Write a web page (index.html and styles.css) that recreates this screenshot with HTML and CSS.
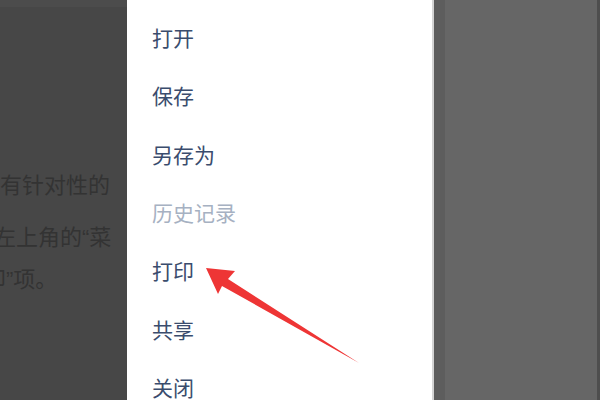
FILE: index.html
```html
<!DOCTYPE html>
<html lang="zh-CN">
  <head>
    <meta charset="UTF-8" />
    <title>菜单 - 打印</title>
    <link rel="stylesheet" href="styles.css">
  </head>
  <body>
    <div class="screen">
      <div class="doc">
        <div class="doc-top"></div>
        <div class="doc-text">
          <p class="line line-1">有针对性的</p>
          <p class="line line-2">左上角的“菜</p>
          <p class="line line-3">印”项。</p>
        </div>
      </div>

      <ul class="menu">
        <li class="menu-item">打开</li>
        <li class="menu-item">保存</li>
        <li class="menu-item">另存为</li>
        <li class="menu-item disabled">历史记录</li>
        <li class="menu-item">打印</li>
        <li class="menu-item">共享</li>
        <li class="menu-item">关闭</li>
      </ul>

      <div class="side"></div>

      <!-- red pointer arrow -->
      <svg class="arrow" width="600" height="400" viewBox="0 0 600 400">
        <polygon points="206,268 235,271 228,279 359,363 222,286 218,294" fill="#ee3535" />
      </svg>
    </div>
  </body>
</html>
```

FILE: styles.css
```css
body {
  margin: 0;
  padding: 0;
  font-family: "Liberation Sans", "Noto Sans CJK SC", sans-serif;
}

.screen {
  position: relative;
  display: flex;
  width: 600px;
  height: 400px;
  overflow: hidden;
  background: #ffffff;
}

.doc {
  width: 127px;
  flex-shrink: 0;
  background: #474747;
  overflow: hidden;
}

.doc-top {
  height: 7px;
  background: #4c4c4c;
}

.doc-text {
  padding-top: 168px;
}

.line {
  margin: 0;
  font-size: 22px;
  line-height: 22px;
  color: #333333;
  white-space: nowrap;
}

.line-1 {
  margin-left: 0;
}

.line-2 {
  margin-top: 30px;
  margin-left: -6px;
}

.line-3 {
  margin-top: 20px;
  margin-left: -16px;
}

.menu {
  list-style: none;
  margin: 0;
  padding: 8px 0 0 25px;
  width: 280px;
  flex-shrink: 0;
  background: #ffffff;
}

.menu-item {
  height: 58.33px;
  line-height: 58.33px;
  font-family: "Noto Sans CJK SC", sans-serif;
  font-size: 21px;
  color: #3a4c6d;
}

.menu-item.disabled {
  color: #a6b1c2;
}

.side {
  flex: 1;
  background: #666666;
  border-left: 2px solid #d4d4d4;
  border-right: 3px solid #4e4e4e;
  box-shadow: inset 11px 0 0 #5d5d5d;
}

.arrow {
  position: absolute;
  left: 0;
  top: 0;
}
```
